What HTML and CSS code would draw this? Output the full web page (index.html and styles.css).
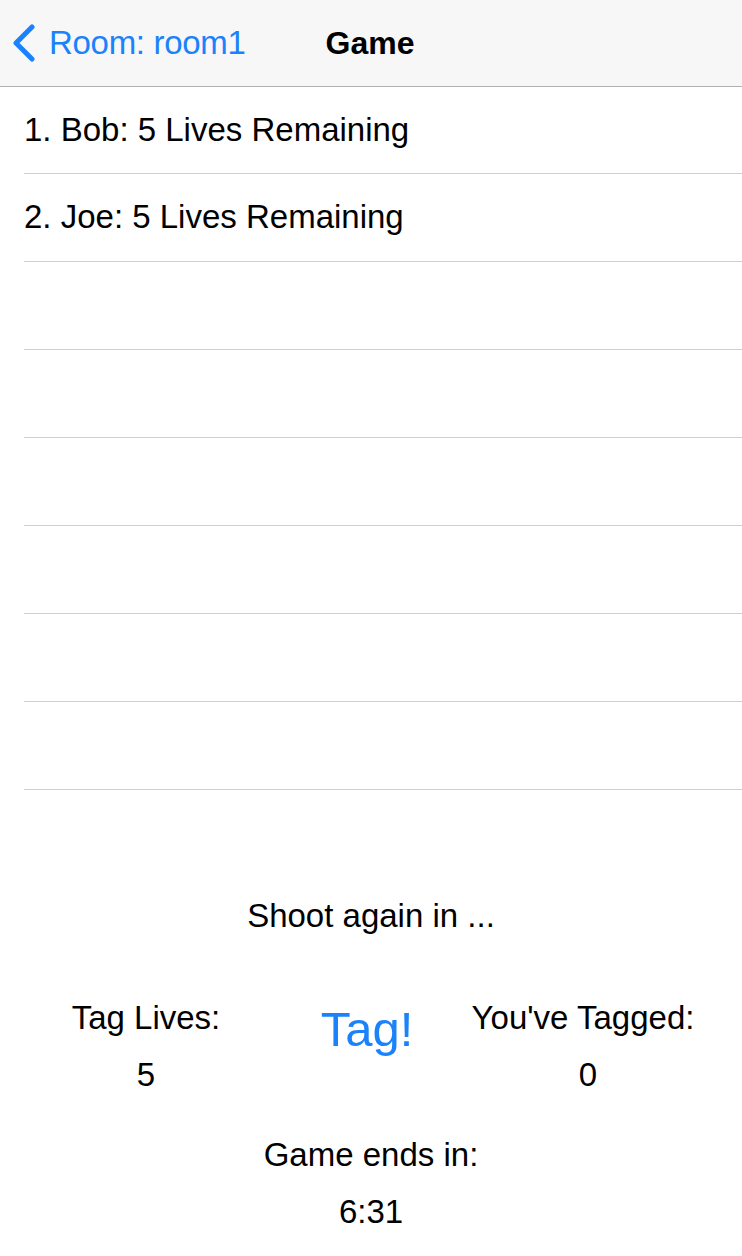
FILE: index.html
```html
<!DOCTYPE html>
<html>
<head>
<meta charset="utf-8">
<link rel="stylesheet" href="styles.css">
</head>
<body>
<div class="screen">
  <header class="navbar">
    <div class="back">
      <svg class="chevron" width="26" height="38" viewBox="0 0 26 38"><path d="M22 3 L6 19 L22 35" fill="none" stroke="#1a82fb" stroke-width="5" stroke-linecap="round" stroke-linejoin="round"/></svg>
      <span class="back-label">Room: room1</span>
    </div>
    <div class="title">Game</div>
  </header>
  <ul class="list">
    <li class="row first">1. Bob: 5 Lives Remaining</li>
    <li class="row">2. Joe: 5 Lives Remaining</li>
    <li class="row"></li>
    <li class="row"></li>
    <li class="row"></li>
    <li class="row"></li>
    <li class="row"></li>
    <li class="row"></li>
  </ul>
  <section class="controls">
    <div class="shoot">Shoot again in ...</div>
    <div class="stats">
      <div class="stat left">
        <div class="label">Tag Lives:</div>
        <div class="value">5</div>
      </div>
      <div class="tag">Tag!</div>
      <div class="stat right">
        <div class="label">You've Tagged:</div>
        <div class="value shifted">0</div>
      </div>
    </div>
    <div class="timer">
      <div class="label">Game ends in:</div>
      <div class="value">6:31</div>
    </div>
  </section>
</div>
</body>
</html>
```

FILE: styles.css
```css
* { box-sizing: border-box; }
html, body { margin: 0; padding: 0; background: #fff; }
body { font-family: "Liberation Sans", Arial, sans-serif; color: #000; }
.screen { width: 742px; height: 1256px; overflow: hidden; }
.navbar {
  height: 87px;
  background: #f7f7f7;
  border-bottom: 1px solid #b2b2b2;
  display: flex;
  align-items: center;
  position: relative;
}
.back { display: flex; align-items: center; padding-left: 10px; }
.chevron { display: block; }
.back-label { color: #1a82fb; font-size: 33px; margin-left: 13px; letter-spacing: -0.3px; }
.title {
  position: absolute; left: 0; right: 0; text-align: center;
  font-weight: bold; font-size: 32px; margin-left: -2px; pointer-events: none;
}
.list { list-style: none; margin: 0; padding: 0 0 0 24px; }
.row {
  height: 88px;
  border-bottom: 1px solid #d0d0d0;
  display: flex; align-items: center;
  font-size: 33px; line-height: 38px;
  padding-bottom: 2px;
}
.row.first { height: 87px; padding-bottom: 0; }
.controls { display: flex; flex-direction: column; align-items: center; padding-top: 107px; font-size: 33px; line-height: 38px; }
.stats { display: flex; width: 100%; align-items: flex-start; margin-top: 64px; }
.stat { display: flex; flex-direction: column; align-items: center; }
.stat.left { width: 292px; }
.stat.right { width: 318px; margin-left: auto; }
.value { margin-top: 19px; }
.value.shifted { padding-left: 10px; }
.tag { color: #1a82fb; font-size: 49px; line-height: 56px; margin-top: 2px; flex: 1; text-align: center; padding-left: 18px; }
.timer { display: flex; flex-direction: column; align-items: center; margin-top: 42px; }
```
